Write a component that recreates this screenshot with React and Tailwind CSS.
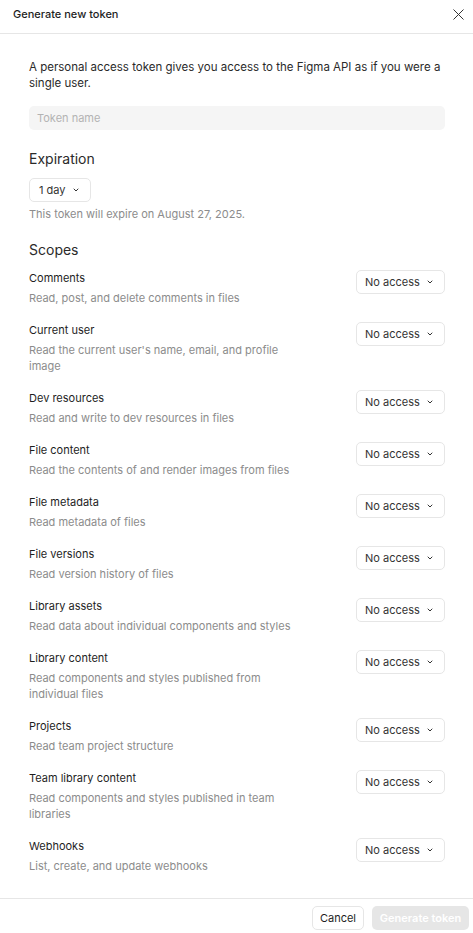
const scopes = [
  { name: 'Comments', desc: 'Read, post, and delete comments in files' },
  { name: 'Current user', desc: "Read the current user's name, email, and profile image" },
  { name: 'Dev resources', desc: 'Read and write to dev resources in files' },
  { name: 'File content', desc: 'Read the contents of and render images from files' },
  { name: 'File metadata', desc: 'Read metadata of files' },
  { name: 'File versions', desc: 'Read version history of files' },
  { name: 'Library assets', desc: 'Read data about individual components and styles' },
  { name: 'Library content', desc: 'Read components and styles published from individual files' },
  { name: 'Projects', desc: 'Read team project structure' },
  { name: 'Team library content', desc: 'Read components and styles published in team libraries' },
  { name: 'Webhooks', desc: 'List, create, and update webhooks' },
]

const Chevron = () => (
  <svg width="8" height="8" viewBox="0 0 8 8" fill="none" className="shrink-0">
    <path d="M2 3l2 2 2-2" stroke="#333" strokeWidth="1" strokeLinecap="round" strokeLinejoin="round" />
  </svg>
)

const Select = ({ label, className = '' }) => (
  <button className={`h-6 flex items-center justify-between border border-[#e6e6e6] rounded-[5px] bg-white text-[11px] text-[#333] ${className}`}>
    <span>{label}</span>
    <Chevron />
  </button>
)

export default function App() {
  return (
    <div className="w-[473px] h-[933px] bg-white text-[#333] overflow-hidden flex flex-col" style={{ fontFamily: 'Inter, "Noto Sans", sans-serif' }}>
      {/* Header */}
      <div className="h-[34px] shrink-0 border-b border-[#e6e6e6] flex items-start justify-between pl-[13px] pr-[8px]">
        <h1 className="text-[11px] leading-4 pt-[6px] font-medium text-[#1e1e1e]">Generate new token</h1>
        <button className="mt-[7px] w-[14px] h-[14px] flex items-center justify-center">
          <svg width="13" height="13" viewBox="0 0 13 13" fill="none">
            <path d="M1.5 1.5l10 10M11.5 1.5l-10 10" stroke="#333" strokeWidth="1" />
          </svg>
        </button>
      </div>

      {/* Body */}
      <div className="flex-1 px-[29px] pr-[28px] pt-[25px] pb-6">
        <p className="text-[11.5px] leading-4 text-[#2a2a2a]">
          A personal access token gives you access to the Figma API as if you were a single user.
        </p>
        <div className="mt-[15px] h-6 rounded-[5px] bg-[#f5f5f5] flex items-center px-2 text-[11px] text-[#b3b3b3]">
          Token name
        </div>

        <h2 className="mt-[19px] text-[14px] leading-5 text-[#2a2a2a]">Expiration</h2>
        <Select label="1 day" className="mt-[9px] w-[62px] pl-[9px] pr-[10px]" />
        <p className="mt-1 text-[11px] leading-4 text-[#8c8c8c]">This token will expire on August 27, 2025.</p>

        <h2 className="mt-[18px] text-[14px] leading-5 text-[#2a2a2a]">Scopes</h2>
        <div className="mt-[10px] flex flex-col gap-4">
          {scopes.map((s) => (
            <div key={s.name} className="flex items-start justify-between">
              <div className="max-w-[282px]">
                <div className="text-[11px] leading-4 text-[#1e1e1e]">{s.name}</div>
                <div className="mt-1 text-[11px] leading-4 text-[#8c8c8c]">{s.desc}</div>
              </div>
              <Select label="No access" className="w-[89px] pl-[8px] pr-[10px]" />
            </div>
          ))}
        </div>
      </div>

      {/* Footer */}
      <div className="shrink-0 border-t border-[#e6e6e6] flex justify-end gap-2 pt-[7px] pb-[3px] pr-1">
        <button className="h-6 w-[52px] border border-[#e6e6e6] rounded-[5px] text-[11px] text-[#1e1e1e] bg-white">Cancel</button>
        <button className="h-6 w-[97px] rounded-[5px] bg-[#e6e6e6] text-[11px] font-semibold text-white">Generate token</button>
      </div>
    </div>
  )
}
